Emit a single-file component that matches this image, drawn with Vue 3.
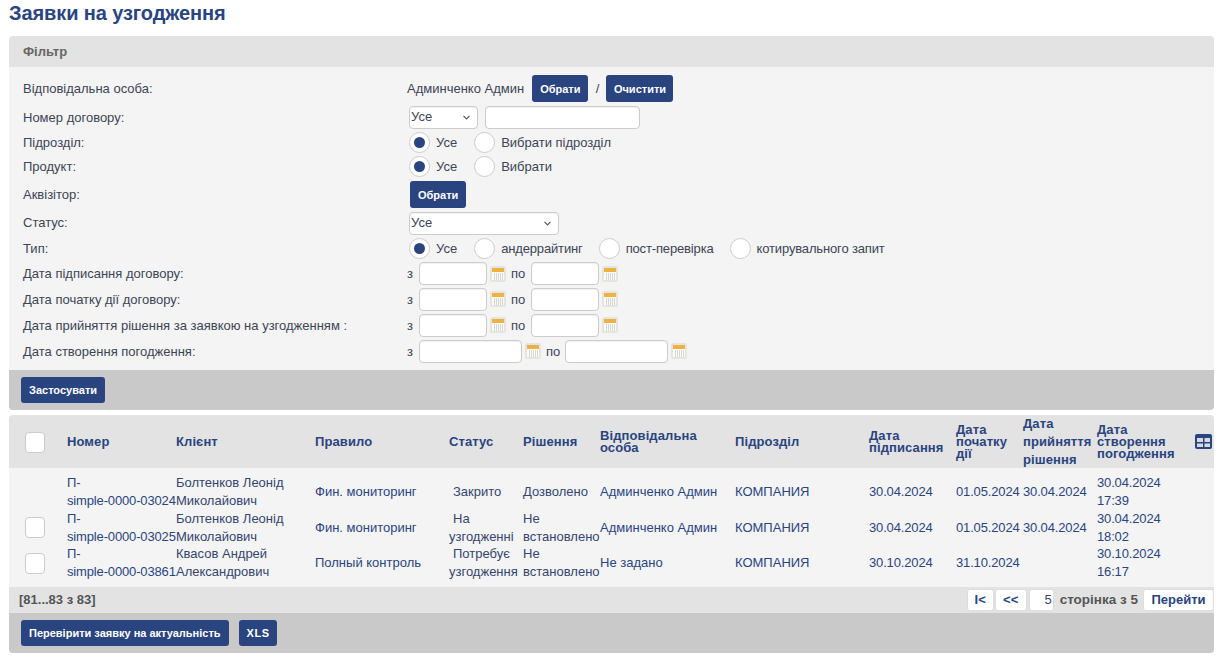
<template>
  <div class="page">
    <h1 class="title">Заявки на узгодження</h1>

    <section class="panel">
      <div class="panel-head">Фільтр</div>
      <div class="filter">
        <div class="row h-33">
          <span>Відповідальна особа:</span>
          <div class="val">
            <span>Админченко Админ</span>
            <button class="btn ml-8">Обрати</button>
            <span class="slash">/</span>
            <button class="btn clear">Очистити</button>
          </div>
        </div>
        <div class="row h-24">
          <span>Номер договору:</span>
          <div class="val indent">
            <select class="sel sel-sm"><option>Усе</option></select>
            <input class="inp inp-num" type="text" />
          </div>
        </div>
        <div class="row h-26">
          <span>Підрозділ:</span>
          <div class="val indent">
            <RadioSet :items="['Усе', 'Вибрати підрозділ']" />
          </div>
        </div>
        <div class="row h-23">
          <span>Продукт:</span>
          <div class="val indent">
            <RadioSet :items="['Усе', 'Вибрати']" />
          </div>
        </div>
        <div class="row h-32">
          <span>Аквізітор:</span>
          <div class="val indent pick"><button class="btn">Обрати</button></div>
        </div>
        <div class="row h-25">
          <span>Статус:</span>
          <div class="val indent"><select class="sel sel-lg"><option>Усе</option></select></div>
        </div>
        <div class="row h-26">
          <span>Тип:</span>
          <div class="val indent type-set">
            <RadioSet :items="['Усе', 'андеррайтинг', 'пост-перевірка', 'котирувального запит']" />
          </div>
        </div>
        <div v-for="d in dateRows" :key="d.label" class="row" :class="d.cls">
          <span>{{ d.label }}</span>
          <div class="val">
            <span class="from">з</span>
            <input class="inp" :class="d.wide ? 'inp-wide' : 'inp-date'" type="text" />
            <CalIcon />
            <span class="to" :class="{ 'to-wide': d.wide }">по</span>
            <input class="inp" :class="d.wide ? 'inp-wide' : 'inp-date'" type="text" />
            <CalIcon />
          </div>
        </div>
      </div>
      <div class="panel-foot"><button class="btn">Застосувати</button></div>
    </section>

    <section class="panel results">
      <div class="grid grid-head">
        <div><span class="check"></span></div>
        <div>Номер</div>
        <div>Клієнт</div>
        <div>Правило</div>
        <div>Статус</div>
        <div>Рішення</div>
        <div>Відповідальна особа</div>
        <div>Підрозділ</div>
        <div>Дата підписання</div>
        <div>Дата початку дії</div>
        <div class="loose">Дата прийняття рішення</div>
        <div>Дата створення погодження</div>
        <div class="col-icon">
          <svg width="17" height="15" viewBox="0 0 17 15">
            <rect width="17" height="15" rx="2" fill="#2a4480" />
            <rect x="2" y="4" width="6" height="4" fill="#d5d9e2" />
            <rect x="9.5" y="4" width="5.5" height="4" fill="#d5d9e2" />
            <rect x="2" y="9.5" width="6" height="3.5" fill="#d5d9e2" />
            <rect x="9.5" y="9.5" width="5.5" height="3.5" fill="#d5d9e2" />
          </svg>
        </div>
      </div>
      <div class="rows">
        <div v-for="r in rows" :key="r.num" class="grid grid-row">
          <div><span v-if="r.check" class="check"></span></div>
          <div class="link num digits">{{ r.num }}</div>
          <div>{{ r.client }}</div>
          <div class="link">{{ r.rule }}</div>
          <div class="status">{{ r.status }}</div>
          <div>{{ r.decision }}</div>
          <div class="link">{{ r.owner }}</div>
          <div class="link">{{ r.unit }}</div>
          <div class="link digits">{{ r.signed }}</div>
          <div class="link digits">{{ r.start }}</div>
          <div class="link digits">{{ r.decided }}</div>
          <div class="link digits">{{ r.created }}</div>
          <div></div>
        </div>
      </div>
      <div class="pager">
        <b class="range">[81...83 з 83]</b>
        <div class="pager-right">
          <button class="pg pg-first">I&lt;</button>
          <button class="pg pg-prev">&lt;&lt;</button>
          <input class="pg-input" type="text" value="5" />
          <b class="pg-text">сторінка з 5</b>
          <button class="pg pg-go">Перейти</button>
        </div>
      </div>
      <div class="panel-foot">
        <button class="btn">Перевірити заявку на актуальність</button>
        <button class="btn xls">XLS</button>
      </div>
    </section>
  </div>
</template>

<script setup>
import { h } from 'vue'

const RadioSet = (props) =>
  h('div', { class: 'radio-set' },
    props.items.map((text, i) =>
      h('label', { class: 'radio-item', key: text }, [
        h('span', { class: ['radio', i === 0 ? 'radio-on' : ''] }),
        h('span', { class: 'radio-text' }, text)
      ])
    )
  )
RadioSet.props = ['items']

const CalIcon = () =>
  h('svg', { class: 'cal', width: 16, height: 16, viewBox: '0 0 16 16' }, [
    h('rect', { x: 0, y: 0, width: 16, height: 16, rx: 2, fill: '#e6e4df' }),
    h('rect', { x: 2, y: 2, width: 12, height: 12, fill: '#fbfbf9' }),
    h('rect', { x: 2, y: 2, width: 12, height: 4, fill: '#efb141' }),
    ...[4, 6, 8, 10, 12].map((x) => h('rect', { x, y: 7, width: 1, height: 7, fill: '#d6d6d2' }))
  ])

const dateRows = [
  { label: 'Дата підписання договору:', cls: 'h-25' },
  { label: 'Дата початку дії договору:', cls: 'h-26' },
  { label: 'Дата прийняття рішення за заявкою на узгодженням :', cls: 'h-26' },
  { label: 'Дата створення погодження:', cls: 'h-26', wide: true }
]

const rows = [
  {
    num: 'П-\nsimple-0000-03024',
    client: 'Болтенков Леонід Миколайович',
    rule: 'Фин. мониторинг',
    status: 'Закрито',
    decision: 'Дозволено',
    owner: 'Админченко Админ',
    unit: 'КОМПАНИЯ',
    signed: '30.04.2024',
    start: '01.05.2024',
    decided: '30.04.2024',
    created: '30.04.2024 17:39',
    check: false
  },
  {
    num: 'П-\nsimple-0000-03025',
    client: 'Болтенков Леонід Миколайович',
    rule: 'Фин. мониторинг',
    status: 'На узгодженні',
    decision: 'Не встановлено',
    owner: 'Админченко Админ',
    unit: 'КОМПАНИЯ',
    signed: '30.04.2024',
    start: '01.05.2024',
    decided: '30.04.2024',
    created: '30.04.2024 18:02',
    check: true
  },
  {
    num: 'П-\nsimple-0000-03861',
    client: 'Квасов Андрей Александрович',
    rule: 'Полный контроль',
    status: 'Потребує узгодження',
    decision: 'Не встановлено',
    owner: 'Не задано',
    unit: 'КОМПАНИЯ',
    signed: '30.10.2024',
    start: '31.10.2024',
    decided: '',
    created: '30.10.2024 16:17',
    check: true
  }
]
</script>

<style>
body {
  background: #fff;
}
.radio-set {
  display: flex;
  align-items: center;
}
.radio-item {
  display: flex;
  align-items: center;
  gap: 6px;
  margin-right: 16px;
}
.radio-item:first-child {
  margin-right: 17px;
}
.type-set .radio-item:not(:first-child) .radio-text {
  letter-spacing: -0.15px;
}
.radio {
  display: block;
  box-sizing: border-box;
  width: 21px;
  height: 21px;
  border: 1px solid #ccc;
  border-radius: 50%;
  background: #fff;
  position: relative;
}
.radio-on::after {
  content: '';
  position: absolute;
  left: 4px;
  top: 4px;
  width: 11px;
  height: 11px;
  border-radius: 50%;
  background: #2a4480;
}
.cal {
  margin-left: 3px;
  flex: none;
}
</style>

<style scoped>
.page {
  box-sizing: border-box;
  width: 1227px;
  padding: 0 13px 0 9px;
  font-family: 'Liberation Sans', Arial, sans-serif;
  font-size: 13px;
  color: #35456e;
}
.title {
  margin: 0;
  height: 36px;
  font-size: 20px;
  line-height: 27px;
  letter-spacing: -0.1px;
  font-weight: bold;
  color: #2a4480;
}
.panel {
  border-radius: 4px;
  overflow: hidden;
  background: #f4f4f4;
}
.results {
  margin-top: 5px;
}
.panel-head {
  height: 31px;
  padding-left: 14px;
  line-height: 31px;
  font-size: 13px;
  font-weight: bold;
  color: #666;
  background: #e3e3e3;
}
.panel-foot {
  display: flex;
  align-items: center;
  gap: 10px;
  height: 40px;
  padding-left: 12px;
  background: #c9c9c9;
}
.filter {
  padding: 5px 0 6px 14px;
  color: #3d4455;
}
.row {
  display: grid;
  grid-template-columns: 384px 1fr;
  align-items: center;
}
.h-23 { height: 23px; }
.h-24 { height: 24px; }
.h-25 { height: 25px; }
.h-26 { height: 26px; }
.h-32 { height: 32px; }
.h-33 { height: 33px; }
.val {
  display: flex;
  align-items: center;
}
.indent {
  padding-left: 2px;
}
.pick {
  padding-left: 3px;
}
.ml-8 {
  margin-left: 8px;
}
.slash {
  width: 18px;
  text-align: center;
}
.btn {
  box-sizing: border-box;
  height: 27px;
  padding: 1px 8px 0;
  border: 0;
  border-radius: 3px;
  background: #2a4480;
  color: #fff;
  font-family: inherit;
  font-size: 11px;
  font-weight: bold;
}
.clear {
  width: 67px;
  padding-left: 0;
  padding-right: 0;
}
.panel-foot .btn {
  height: 26px;
  padding-top: 0;
}
.xls {
  letter-spacing: 0.5px;
}
.sel,
.inp {
  box-sizing: border-box;
  height: 23px;
  padding: 0;
  border: 1px solid #ccc;
  border-radius: 4px;
  background-color: #fff;
  font-family: inherit;
  font-size: 13px;
  color: #3d4455;
  box-shadow: inset 0 1px 1px rgba(0, 0, 0, 0.06);
}
.sel {
  appearance: none;
  padding-left: 1px;
  padding-bottom: 2px;
  background-image: url("data:image/svg+xml,%3Csvg xmlns='http://www.w3.org/2000/svg' width='7' height='5'%3E%3Cpath d='M.5 .8 3.5 3.8 6.5 .8' fill='none' stroke='%23555' stroke-width='1.2'/%3E%3C/svg%3E");
  background-repeat: no-repeat;
  background-position: right 7px center;
}
.sel-sm { width: 69px; }
.sel-lg {
  width: 150px;
  margin-top: 2px;
}
.inp-num {
  width: 155px;
  margin-left: 7px;
}
.inp-date { width: 68px; }
.inp-wide { width: 103px; }
.from {
  width: 12px;
}
.to {
  width: 15px;
  margin: 0 5px;
}
.to-wide {
  margin-right: 4px;
}
.grid {
  display: grid;
  grid-template-columns: 58px 109px 139px 134px 74px 77px 135px 134px 87px 67px 74px 98px 19px;
  align-items: center;
}
.grid-head {
  height: 53px;
  background: #e3e3e3;
  font-weight: bold;
  line-height: 11.7px;
  letter-spacing: 0.1px;
  color: #2a4480;
}
.loose {
  line-height: 18px;
}
.check {
  display: block;
  box-sizing: border-box;
  width: 20px;
  height: 21px;
  margin-left: 16px;
  border: 1px solid #ccc;
  border-radius: 4px;
  background: #fff;
}
.rows {
  padding: 6px 0;
}
.grid-row {
  height: 35.5px;
  line-height: 18px;
}
.link {
  color: #2a4480;
}
.digits {
  letter-spacing: -0.15px;
}
.num {
  white-space: pre;
}
.status {
  text-indent: 4px;
}
.pager {
  display: flex;
  justify-content: space-between;
  align-items: center;
  height: 26px;
  padding-left: 10px;
  background: #e3e3e3;
}
.range,
.pg-text {
  color: #555;
}
.pager-right {
  display: flex;
  align-items: center;
}
.pg {
  box-sizing: border-box;
  height: 22px;
  padding: 0;
  border: 1px solid #ddd;
  border-radius: 3px;
  background: #fff;
  color: #2a4480;
  font-family: inherit;
  font-size: 13px;
  font-weight: bold;
}
.pg-first { width: 27px; }
.pg-prev { width: 32px; margin-left: 1px; }
.pg-go { width: 71px; margin-left: 5px; }
.pg-input {
  box-sizing: border-box;
  width: 25px;
  height: 22px;
  margin-left: 2px;
  padding: 0 1px 0 0;
  border: 1px solid #ddd;
  border-radius: 3px;
  text-align: right;
  font-family: inherit;
  font-size: 13px;
  color: #35456e;
}
.pg-text {
  margin-left: 6px;
  font-size: 13.5px;
}
</style>
